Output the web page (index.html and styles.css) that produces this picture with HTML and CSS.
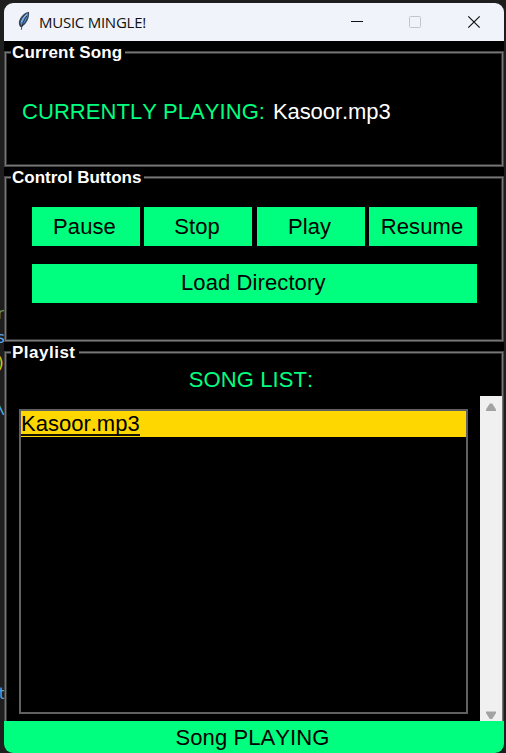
FILE: index.html
```html
<!DOCTYPE html>
<html lang="en">
<head>
<meta charset="utf-8">
<title>MUSIC MINGLE!</title>
<link rel="stylesheet" href="styles.css">
</head>
<body>
<div class="backdrop" aria-hidden="true">
  <span class="code c1">r</span><span class="code c2">s</span><span class="code c3">)</span><span class="code c4">\</span><span class="code c5">t</span>
</div>
<main class="window">
  <header class="titlebar">
    <svg class="feather" width="14" height="20" viewBox="0 0 14 20">
      <path d="M12 .8C7.800 1.300 3 6 2 10.500c-.4 2 .1 4.200 1.200 5.500l1.800-.2C9.200 13 12.800 7.500 12 .8z" fill="#34445a"/>
      <path d="M11 2C7.500 4 4.300 8 3.400 12l1 2.400C8.200 11.500 11 7 11 2z" fill="#5590d3"/>
      <path d="M9.800 3.300C7.500 5 5.300 8.200 4.500 11" fill="none" stroke="#a8c5df" stroke-width="1"/>
      <path d="M9.800 5C7 9 5 13 4.300 18.800" fill="none" stroke="#1c2430" stroke-width=".8"/>
    </svg>
    <h1 class="title">MUSIC MINGLE!</h1>
    <svg class="controls" width="132" height="14" viewBox="0 0 132 14">
      <path d="M1 6.500h12" stroke="#111" stroke-width="1.100"/>
      <rect x="59.500" y="1.500" width="11" height="11" rx="1" fill="none" stroke="#c3c5ca"/>
      <path d="M118.300 1.300l11.400 11.400M129.700 1.300L118.300 12.700" stroke="#111" stroke-width="1.200"/>
    </svg>
  </header>
  <section class="group current">
    <h2 class="legend l1">Current Song</h2>
    <p class="now"><span class="label">CURRENTLY PLAYING:</span><span class="track">Kasoor.mp3</span></p>
  </section>
  <section class="group buttons">
    <h2 class="legend l2">Control Buttons</h2>
    <div class="grid">
      <button class="btn">Pause</button><button class="btn">Stop</button><button class="btn">Play</button><button class="btn">Resume</button>
      <button class="btn wide">Load Directory</button>
    </div>
  </section>
  <section class="group playlist">
    <h2 class="legend l3">Playlist</h2>
    <p class="heading">SONG LIST:</p>
    <div class="listrow">
      <div class="listbox"><div class="item"><span class="name">Kasoor.mp3</span></div></div>
      <div class="scrollbar">
        <svg width="12" height="9" viewBox="0 0 12 9"><path d="M4.800 .5h2.400L11 6.500V8H1V6.500z" fill="#a3a3a3"/></svg>
        <svg width="12" height="9" viewBox="0 0 12 9"><path d="M1 .5h10V2L7.200 8H4.800L1 2z" fill="#a3a3a3"/></svg>
      </div>
    </div>
  </section>
  <footer class="status">Song PLAYING</footer>
</main>
</body>
</html>
```
FILE: styles.css
```css
* { box-sizing: border-box; }
body {
  margin: 0;
  width: 506px;
  height: 753px;
  overflow: hidden;
  padding: 3px 2px 0 4px;
  background: #1e1e1e;
  font-family: "Liberation Sans", Arial, sans-serif;
  font-kerning: none;
}
h1, h2, p { margin: 0; }
.backdrop {
  position: absolute;
  left: 0;
  top: 0;
  width: 4px;
  height: 753px;
  overflow: hidden;
  font: 16px/20px "DejaVu Sans Mono", monospace;
}
.code { position: absolute; left: -4px; }
.c1 { top: 304px; color: #6a9955; }
.c2 { top: 328px; color: #59a7ee; }
.c3 { top: 353px; color: #d8c916; }
.c4 { top: 399px; color: #4fb3ee; }
.c5 { top: 684px; color: #4fa5dc; left: -3px; }
.window {
  position: relative;
  display: flex;
  flex-direction: column;
  width: 500px;
  height: 750px;
  overflow: hidden;
  border-radius: 9px;
  background: #000;
}
.titlebar {
  display: flex;
  align-items: center;
  height: 38px;
  flex: none;
  padding-left: 13px;
  background: #f0f3fa;
}
.feather { margin-top: -2px; }
.title {
  margin-left: 8px;
  font: 400 15px/20px "Open Sans", sans-serif;
  letter-spacing: -0.25px;
  color: #111;
}
.controls { margin-left: auto; margin-right: 22px; }
.group {
  position: relative;
  flex: none;
  border: 1px solid #454545;
  box-shadow: inset 0 0 0 1px #777, inset 0 0 0 2px #333;
  padding: 2px;
}
.current { height: 116px; margin-top: 10px; }
.buttons { height: 166px; margin-top: 9px; }
.playlist {
  height: 370px;
  margin-top: 9px;
  border-bottom: 0;
  box-shadow: inset 1px 1px #777, inset -1px 0 #777, inset 2px 2px #333, inset -2px 0 #333;
}
.legend {
  position: absolute;
  left: 6px;
  top: -9px;
  padding: 0 3px 0 1px;
  background: #000;
  color: #fff;
  font-size: 17px;
  line-height: 20px;
  font-weight: 700;
  white-space: nowrap;
}
.l1 { letter-spacing: .15px; }
.l2 { letter-spacing: 0; }
.l3 { letter-spacing: .5px; }
.now {
  display: flex;
  padding: 45px 0 0 15px;
  font-size: 22px;
  line-height: 26px;
  white-space: nowrap;
}
.label { width: 251px; color: #00ff7f; letter-spacing: .05px; }
.track { color: #fff; letter-spacing: -.1px; }
.grid {
  display: grid;
  grid-template-columns: repeat(4, 108px);
  grid-template-rows: 39px 39px;
  gap: 17.5px 4.5px;
  padding: 28px 0 0 24.500px;
}
.btn {
  border: 0;
  padding: 0 2px 0 0;
  background: #00ff7f;
  color: #000;
  font: 22px/26px "Liberation Sans", Arial, sans-serif;
  letter-spacing: .1px;
}
.wide { grid-column: 1 / -1; }
.heading {
  padding: 13px 6px 0 0;
  text-align: center;
  color: #00ff7f;
  font-size: 22px;
  line-height: 26px;
  letter-spacing: .1px;
}
.listrow {
  display: flex;
  justify-content: space-between;
  margin-top: 3px;
  height: 325px;
  padding-left: 12px;
}
.listbox {
  width: 449px;
  height: 305px;
  margin-top: 13px;
  border: 2px solid #606060;
}
.item {
  height: 26px;
  background: #ffd700;
  font-size: 22px;
  line-height: 26px;
}
.name {
  display: inline-block;
  height: 25px;
  border-bottom: 2px solid #171300;
}
.scrollbar {
  display: flex;
  flex-direction: column;
  align-items: center;
  justify-content: space-between;
  width: 22px;
  margin-right: -1px;
  padding: 7px 0 1px;
  background: #f0f0f0;
}
.status {
  height: 32px;
  flex: none;
  background: #00ff7f;
  color: #000;
  text-align: center;
  padding-right: 3px;
  font-size: 22px;
  line-height: 34px;
  letter-spacing: .1px;
}
```
